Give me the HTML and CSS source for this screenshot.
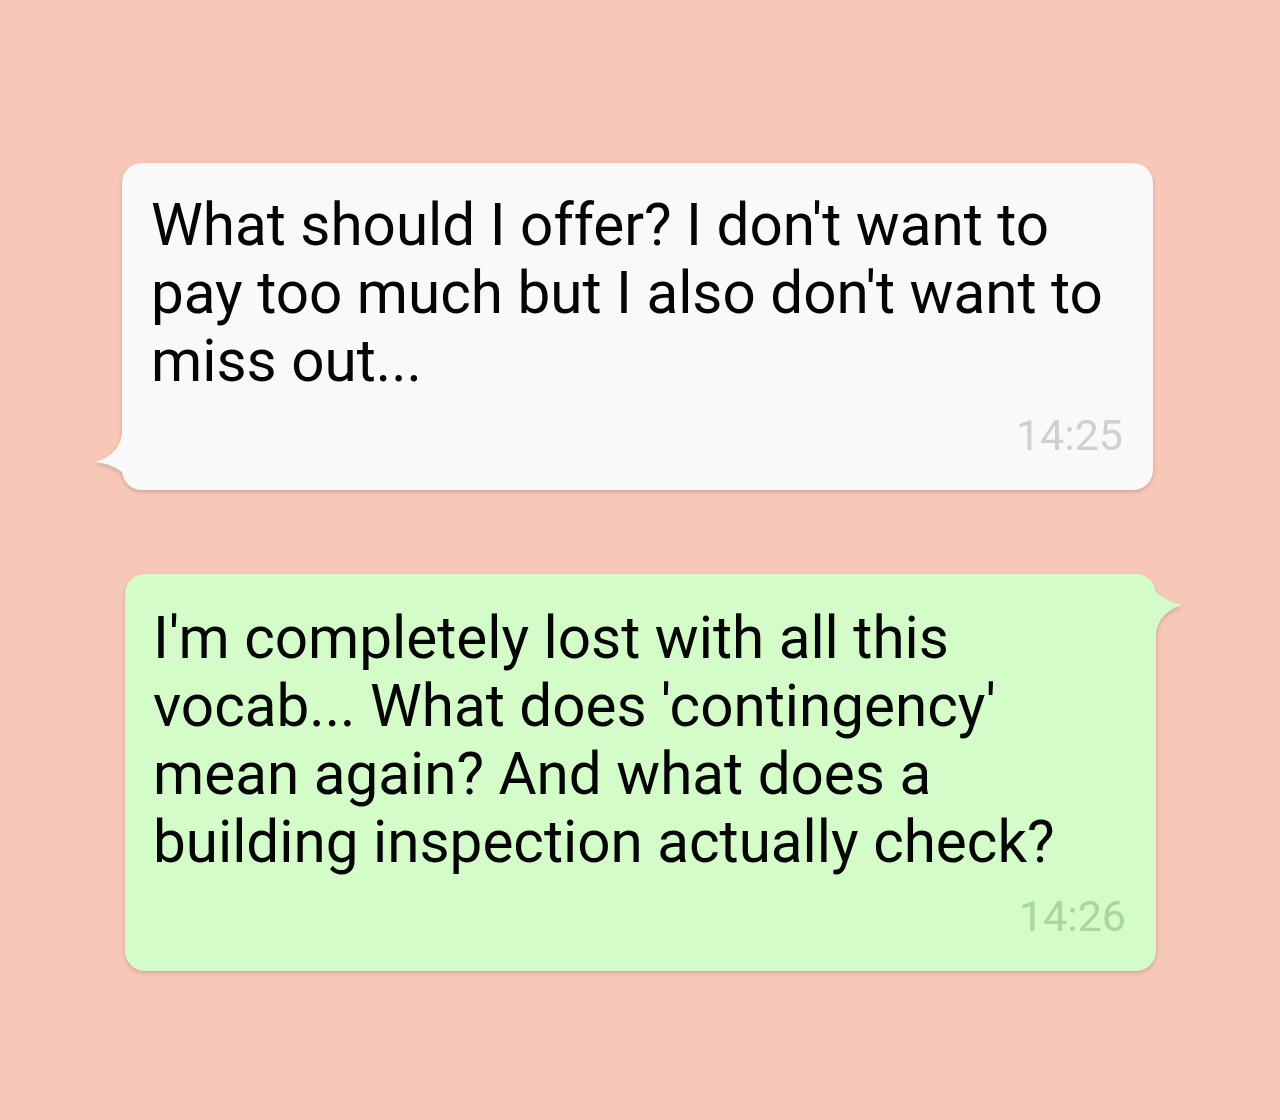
FILE: index.html
```html
<!DOCTYPE html>
<html lang="en">
<head>
<meta charset="utf-8">
<title>Chat</title>
<link rel="stylesheet" href="styles.css">
</head>
<body>
<main class="chat">
  <div class="bubble bubble-in">
    <svg class="tail tail-in" width="32" height="42" viewBox="0 0 32 42" aria-hidden="true">
      <path d="M32,0 L30,2 Q27,23 3,30 Q17,31 30,40 L32,42 Z" fill="#f9f9f9"/>
    </svg>
    <p class="text">What should I offer? I don't want to pay too much but I also don't want to miss out...</p>
    <div class="time">14:25</div>
  </div>
  <div class="bubble bubble-out">
    <svg class="tail tail-out" width="32" height="44" viewBox="0 0 32 44" aria-hidden="true">
      <path d="M0,0 L2,2 Q14,12 28,15 Q6,22 2,42 L0,44 Z" fill="#d4fcc8"/>
    </svg>
    <p class="text">I'm completely lost with all this vocab... What does 'contingency' mean again? And what does a building inspection actually check?</p>
    <div class="time">14:26</div>
  </div>
</main>
</body>
</html>
```

FILE: styles.css
```css
html, body {
  margin: 0;
  padding: 0;
}
body {
  background: #f7c8b8;
  font-family: Roboto, "Noto Sans", "Liberation Sans", sans-serif;
  width: 1280px;
  height: 1120px;
  overflow: hidden;
}
.chat {
  display: flex;
  flex-direction: column;
  gap: 84px;
  padding-top: 163px;
}
.bubble {
  position: relative;
  width: 1031px;
  box-sizing: border-box;
  padding: 28px 30px 30px 29px;
  border-radius: 20px;
  filter: drop-shadow(0 2px 2px rgba(120, 70, 55, 0.28));
}
.bubble-in {
  margin-left: 122px;
  background: #f9f9f9;
}
.bubble-out {
  margin-left: 125px;
  background: #d4fcc8;
  padding-top: 30px;
  padding-left: 28px;
}
.text {
  margin: 0;
  font-size: 58.4px;
  line-height: 68px;
  color: #050505;
}
.time {
  margin-top: 15px;
  text-align: right;
  font-size: 43px;
  line-height: 50px;
  color: #d0d0d0;
}
.bubble-out .time {
  color: #aad69e;
}
.tail {
  position: absolute;
  display: block;
}
.tail-in {
  left: -30px;
  bottom: 16px;
}
.tail-out {
  right: -30px;
  top: 16px;
}
```
